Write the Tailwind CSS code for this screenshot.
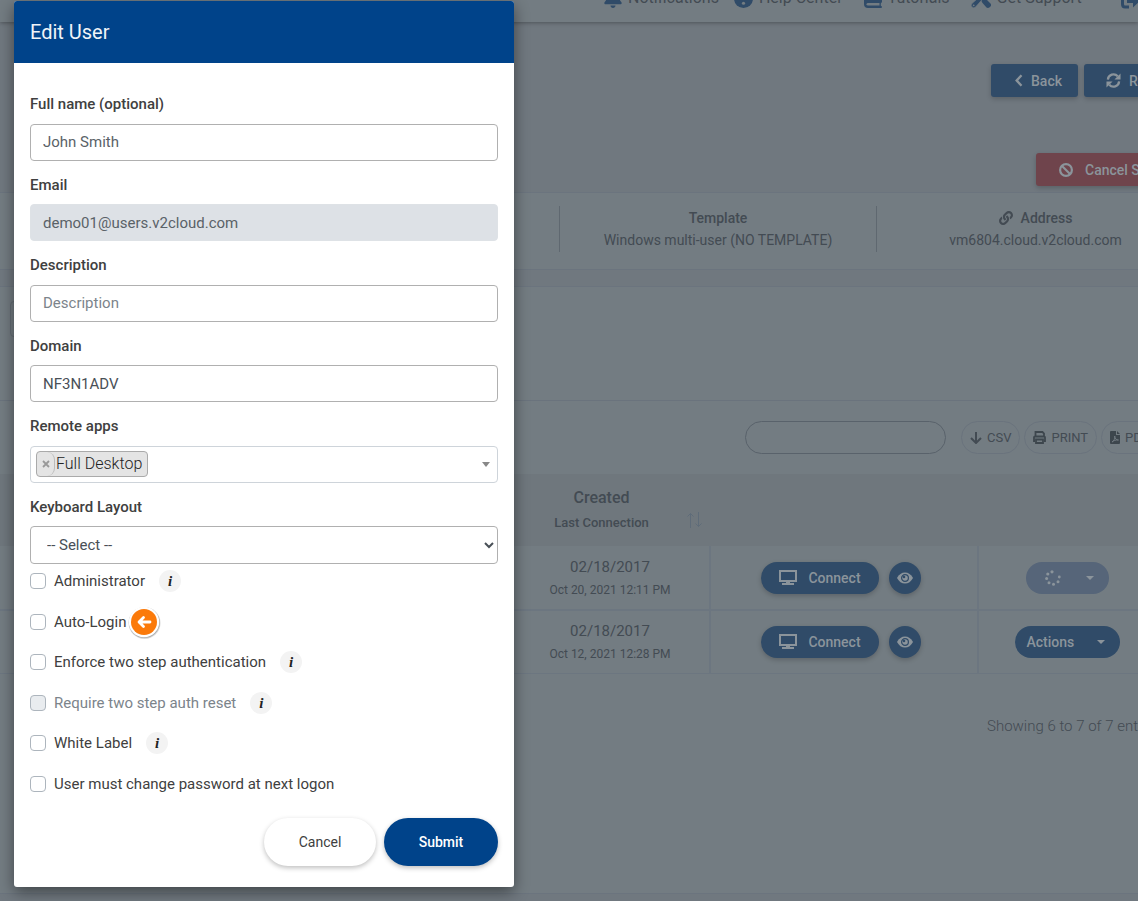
<!DOCTYPE html>
<html lang="en">
<head>
    <meta charset="UTF-8">
    <meta name="viewport" content="width=device-width, initial-scale=1.0">
    <title>Edit User</title>
    <script src="https://cdn.jsdelivr.net/npm/@tailwindcss/browser@4"></script>
</head>
<body class="bg-[#70787f] font-[Roboto,sans-serif] text-[15px] text-[#434b53] min-h-screen overflow-hidden">
    <!-- Page behind the dialog -->
    <div class="h-screen overflow-hidden">
        <!-- Top Navigation -->
        <nav class="relative bg-[#737c82] h-[22px] pl-[604px] pb-3 flex items-end gap-[15px] whitespace-nowrap text-base leading-6 shadow-[0_1px_4px_rgba(0,0,0,0.3)]">
            <a href="#" class="flex items-center gap-[6px]">
                <svg class="w-[18px] h-5 fill-[#304b68]" viewBox="0 0 448 512"><path d="M224 512c35 0 64-29 64-64H160c0 35 29 64 64 64zm215-150c-19-21-55-52-55-154 0-78-54-140-128-155V32a32 32 0 0 0-64 0v21C118 68 64 130 64 208c0 102-36 133-55 154-6 6-9 14-9 22 0 16 13 32 32 32h384c19 0 32-16 32-32 0-8-3-16-9-22z"/></svg>
                Notifications
            </a>
            <a href="#" class="flex items-center gap-[6px]">
                <svg class="w-[19px] h-[19px]" viewBox="0 0 20 20"><circle cx="10" cy="10" r="10" fill="#304b68"/><path d="M7 7.500c0-4 6-4 6-.5 0 2-3 2-3 4.500" fill="none" stroke="#737c82" stroke-width="2"/><circle cx="10" cy="15" r="1.700" fill="#737c82"/></svg>
                Help Center
            </a>
            <a href="#" class="flex items-center gap-[6px] ml-[6px]">
                <svg class="w-[18px] h-5" viewBox="0 0 18 20"><path d="M4 0h12.500Q18 0 18 1.500v12q0 1-1 1.500-.5 1.500 0 3 1 0 1 1t-1 1H4q-4 0-4-4V4Q0 0 4 0z" fill="#304b68"/><path d="M4 15h11.500v2.500H4q-1.500 0-1.500-1.200T4 15z" fill="#737c82"/></svg>
                Tutorials
            </a>
            <a href="#" class="flex items-center gap-[6px] ml-[6px]">
                <svg class="w-5 h-5" viewBox="0 0 20 20"><path d="M1 0l5 3v3l5 5c2-1 4 0 5 1l3.500 3.500q1.500 2-.5 3.500t-3.500.5L12 15.500c-1.500-1.500-2-3-1-4.500L5.500 7H3L0 2z" fill="#304b68"/><path d="M19.700 4.500A5.500 5.500 0 0 1 12.500 10L4.500 19Q2.500 20.500 1 19t0-3.500L9.500 8A5.500 5.500 0 0 1 15.500.3L13 3v3.500h3.500z" fill="#304b68" stroke="#737c82" stroke-width=".6"/><circle cx="2.700" cy="17.300" r=".9" fill="#737c82"/></svg>
                Get Support
            </a>
            <a href="#" aria-label="Log out" class="ml-6">
                <svg class="w-5 h-5" viewBox="0 0 20 20"><path d="M8 3H4Q1.500 3 1.500 6v8q0 3 2.500 3h4" fill="none" stroke="#304b68" stroke-width="3"/><path d="M6 7.500h6V3l8 7-8 7.500V13H6z" fill="#304b68"/></svg>
            </a>
        </nav>

        <!-- Page Actions -->
        <div class="flex gap-[6px] pl-[991px] mt-[42px] whitespace-nowrap text-sm font-medium text-[#8b949b]">
            <button class="shrink-0 flex items-center justify-center gap-2 w-[87px] h-[33px] pl-2 rounded-[3px] bg-[#304b68] shadow-[0_2px_5px_rgba(0,0,0,0.2)]">
                <svg class="w-2 h-[13px]" viewBox="0 0 8 13"><path d="M6.500 1.300L1.700 6.500l4.800 5.200" fill="none" stroke="currentColor" stroke-width="2.400"/></svg>
                Back
            </button>
            <button class="shrink-0 flex items-center gap-2 w-[110px] h-[33px] pl-[22px] rounded-[3px] bg-[#304b68] shadow-[0_2px_5px_rgba(0,0,0,0.2)]">
                <svg class="w-[15px] h-[15px]" viewBox="0 0 16 16"><path d="M2 7a6 6 0 0 1 10.500-3.500M14 9A6 6 0 0 1 3.500 12.500" fill="none" stroke="currentColor" stroke-width="2.400"/><path d="M15.500.5V7H9zM.5 15.500V9H7z" fill="currentColor"/></svg>
                Refresh
            </button>
        </div>
        <div class="flex pl-[1036px] mt-14 whitespace-nowrap text-sm font-medium text-[#8b949b]">
            <button class="shrink-0 flex items-center gap-3 w-[190px] h-[33px] pl-[23px] rounded-[3px] bg-[#6f444c] shadow-[0_2px_5px_rgba(0,0,0,0.2)]">
                <svg class="w-[14px] h-[14px]" viewBox="0 0 14 14" fill="none" stroke="currentColor" stroke-width="2.200"><circle cx="7" cy="7" r="5.900"/><path d="M3 3l8 8"/></svg>
                Cancel Subscription
            </button>
        </div>

        <!-- Server Info -->
        <div class="grid grid-cols-[560px_317px_317px] mt-[6px] pt-[13px] pb-[17px] bg-[#737c82] border-y border-[#6b747e] text-center text-sm leading-[22px]">
            <div class="border-r border-[#5f6870]"></div>
            <div class="border-r border-[#5f6870] py-px">
                <div class="font-medium">Template</div>
                <div>Windows multi-user (NO TEMPLATE)</div>
            </div>
            <div class="py-px">
                <div class="font-medium flex items-center justify-center gap-2">
                    <svg class="w-[14px] h-[14px]" viewBox="0 0 512 512" fill="currentColor"><path d="M326.600 185.400c59.700 59.800 58.900 155.700.4 214.600-.1.100-.3.300-.4.400l-67.200 67.200c-59.300 59.300-155.700 59.300-215 0-59.300-59.300-59.300-155.700 0-215l37.100-37.100c9.800-9.800 26.800-3.300 27.300 10.600.6 17.700 3.800 35.500 9.700 52.700 2 5.800.6 12.300-3.800 16.600l-13.100 13.100c-28 28-28.900 73.700-1.200 102 28 28.600 74.100 28.700 102.300.5l67.200-67.200c28.200-28.200 28.100-73.800 0-101.800-3.700-3.700-7.400-6.600-10.300-8.600a16 16 0 0 1-6.900-12.600c-.4-10.600 3.300-21.500 11.700-29.800l21.100-21.100c5.500-5.500 14.200-6.200 20.600-1.700a152.500 152.500 0 0 1 20.500 17.200zM467.500 44.400c-59.300-59.300-155.700-59.300-215 0l-67.200 67.200c-.1.100-.3.300-.4.400-58.600 58.900-59.400 154.800.4 214.600a152.500 152.500 0 0 0 20.500 17.200c6.400 4.500 15.100 3.800 20.600-1.700l21.100-21.100c8.400-8.400 12.100-19.200 11.700-29.800a16 16 0 0 0-6.900-12.600c-2.900-2-6.600-4.900-10.300-8.600-28.100-28.100-28.200-73.600 0-101.800l67.200-67.200c28.200-28.200 74.300-28.100 102.300.5 27.800 28.300 26.900 73.900-1.200 102l-13.100 13.100c-4.400 4.400-5.800 10.800-3.800 16.600 5.900 17.200 9 35 9.700 52.700.5 13.900 17.500 20.400 27.300 10.600l37.100-37.100c59.300-59.300 59.300-155.700 0-215z"/></svg>
                    Address
                </div>
                <div>vm6804.cloud.v2cloud.com</div>
            </div>
        </div>

        <!-- Users Panel -->
        <main class="mt-4 bg-[#737c82] border-y border-[#6b747e]">
            <div class="h-[114px] pt-[14px] pl-[10px] border-b border-[#6a737d]">
                <div class="w-40 h-9 rounded border border-[#646c74]"></div>
            </div>

            <div class="flex items-center gap-1 pl-[745px] py-5 whitespace-nowrap text-[13px]">
                <input type="search" aria-label="Search users" class="shrink-0 w-[201px] h-[33px] mr-[11px] px-3 rounded-full border border-[#59626b]">
                <button class="shrink-0 flex items-center gap-[5px] h-[33px] px-2 rounded-full border border-[#6a737d]">
                    <svg class="w-3 h-3" viewBox="0 0 12 12" fill="none" stroke="currentColor" stroke-width="2"><path d="M6 0v11M1 6l5 5 5-5"/></svg>
                    CSV
                </button>
                <button class="shrink-0 flex items-center gap-[5px] h-[33px] px-2 rounded-full border border-[#6a737d]">
                    <svg class="w-[13px] h-[13px]" viewBox="0 0 13 13"><path d="M2.500 5V1h7l1.500 1.500V5M2 10H1V6.500Q1 5.500 2 5.500h9q1 0 1 1V10h-1M3 8.500h7V12H3z" fill="none" stroke="#3d464d" stroke-width="1.800"/></svg>
                    PRINT
                </button>
                <button class="shrink-0 flex items-center gap-[5px] h-[33px] px-2 rounded-full border border-[#6a737d]">
                    <svg class="w-[10px] h-[13px]" viewBox="0 0 10 13"><path d="M1 0h5v4h4v8q0 1-1 1H1q-1 0-1-1V1q0-1 1-1zM7 0l3 3H7z" fill="#3d464d"/><path d="M2 11c2-1 3-3 2.700-6 .3 3 1.800 4 3.800 4-3-.3-5 .7-6.500 2z" fill="none" stroke="#737c82" stroke-width=".9"/></svg>
                    PDF
                </button>
            </div>

            <table class="w-[1157px] table-fixed text-center">
                <colgroup>
                    <col class="w-[493px]">
                    <col class="w-[217px]">
                    <col class="w-[268px]">
                    <col class="w-[179px]">
                </colgroup>
                <thead class="bg-[#6f777d]">
                    <tr class="h-[72px]">
                        <th></th>
                        <th class="relative font-medium">
                            <div class="text-base leading-[26px]">Created</div>
                            <div class="text-[13px] leading-6">Last Connection</div>
                            <svg class="absolute right-2 bottom-[18px] w-4 h-4" viewBox="0 0 16 16" fill="none" stroke="#5f6c79"><path d="M4.500 16V1.500M1.500 4.500l3-3 3 3M12.500 0v14.500M9.500 11.500l3 3 3-3"/></svg>
                        </th>
                        <th></th>
                        <th></th>
                    </tr>
                </thead>
                <tbody>
                    <tr class="h-16 border-b-2 border-[#6c7680]">
                        <td></td>
                        <td class="pl-[18px] border-r-2 border-[#6c7680]">
                            <div class="leading-6">02/18/2017</div>
                            <div class="text-xs leading-[22px]">Oct 20, 2021 12:11 PM</div>
                        </td>
                        <td class="border-r-2 border-[#6c7680]">
                            <div class="flex items-center justify-center gap-[10px] pr-[6px] font-medium text-[#8b949b]">
                                <button class="flex items-center justify-center gap-[11px] w-[118px] h-8 rounded-full bg-[#304b68] text-sm shadow-[0_2px_5px_rgba(0,0,0,0.2)]">
                                    <svg class="w-[18px] h-[15px]" viewBox="0 0 18 15"><path d="M1 1h16v10H1zM8 11v2h2v-2M3 14h12" fill="none" stroke="currentColor" stroke-width="2"/></svg>
                                    Connect
                                </button>
                                <button aria-label="View user" class="flex items-center justify-center w-8 h-8 rounded-full bg-[#304b68] shadow-[0_2px_5px_rgba(0,0,0,0.2)]">
                                    <svg class="w-4 h-3" viewBox="0 0 16 12"><path d="M0 6Q3 .5 8 .5T16 6q-3 5.500-8 5.500T0 6z" fill="currentColor"/><circle cx="8" cy="6" r="3.400" fill="none" stroke="#304b68" stroke-width="1.200"/><circle cx="7" cy="5" r="1.300" fill="#304b68"/></svg>
                                </button>
                            </div>
                        </td>
                        <td class="pr-[2px]">
                            <button aria-label="Loading actions" class="inline-flex items-center gap-[25px] w-[83px] h-8 pl-[19px] rounded-full bg-[#566579] align-middle text-[#8b949b]">
                                <svg class="w-4 h-4 shrink-0" viewBox="0 0 16 16" fill="currentColor"><circle cx="7" cy="1.800" r="1.600"/><circle cx="2.800" cy="4" r="1.600"/><circle cx="1.600" cy="8.500" r="1.500"/><circle cx="4" cy="12.800" r="1.500"/><circle cx="8.500" cy="14.300" r="1.500"/><circle cx="13" cy="11.800" r="1.500"/><circle cx="14.300" cy="7" r="1.400"/></svg>
                                <svg class="w-2 h-1 shrink-0" viewBox="0 0 8 4"><path d="M0 0h8L4 4z" fill="currentColor"/></svg>
                            </button>
                        </td>
                    </tr>
                    <tr class="h-[63px] border-b border-[#6c7680]">
                        <td></td>
                        <td class="pl-[18px] border-r-2 border-[#6c7680]">
                            <div class="leading-6">02/18/2017</div>
                            <div class="text-xs leading-[22px]">Oct 12, 2021 12:28 PM</div>
                        </td>
                        <td class="border-r-2 border-[#6c7680]">
                            <div class="flex items-center justify-center gap-[10px] pr-[6px] font-medium text-[#8b949b]">
                                <button class="flex items-center justify-center gap-[11px] w-[118px] h-8 rounded-full bg-[#304b68] text-sm shadow-[0_2px_5px_rgba(0,0,0,0.2)]">
                                    <svg class="w-[18px] h-[15px]" viewBox="0 0 18 15"><path d="M1 1h16v10H1zM8 11v2h2v-2M3 14h12" fill="none" stroke="currentColor" stroke-width="2"/></svg>
                                    Connect
                                </button>
                                <button aria-label="View user" class="flex items-center justify-center w-8 h-8 rounded-full bg-[#304b68] shadow-[0_2px_5px_rgba(0,0,0,0.2)]">
                                    <svg class="w-4 h-3" viewBox="0 0 16 12"><path d="M0 6Q3 .5 8 .5T16 6q-3 5.500-8 5.500T0 6z" fill="currentColor"/><circle cx="8" cy="6" r="3.400" fill="none" stroke="#304b68" stroke-width="1.200"/><circle cx="7" cy="5" r="1.300" fill="#304b68"/></svg>
                                </button>
                            </div>
                        </td>
                        <td class="pr-[2px]">
                            <button class="inline-flex items-center justify-between w-[105px] h-8 pl-3 pr-[15px] rounded-full bg-[#304b68] align-middle text-sm font-medium text-[#8b949b]">
                                Actions
                                <svg class="w-2 h-1" viewBox="0 0 8 4"><path d="M0 0h8L4 4z" fill="currentColor"/></svg>
                            </button>
                        </td>
                    </tr>
                </tbody>
            </table>

            <p class="pl-[987px] pt-10 pb-[155px] leading-6 font-light whitespace-nowrap">Showing 6 to 7 of 7 entries</p>
        </main>
    </div>

    <!-- Edit User Dialog -->
    <div role="dialog" aria-modal="true" aria-labelledby="dialog-title" class="absolute top-px left-[14px] w-[500px] bg-white rounded-[3px] text-[#404040] shadow-[0_5px_15px_rgba(0,0,0,0.45)]">
        <div class="bg-[#00438a] rounded-t-[3px] px-4 py-4">
            <h1 id="dialog-title" class="text-xl leading-[30px] text-[#f0f4f8]">Edit User</h1>
        </div>
        <form class="px-4 pt-[30px] pb-[21px] leading-normal">
            <label for="full-name" class="block mb-2 font-medium">Full name (optional)</label>
            <input id="full-name" type="text" value="John Smith" class="block w-full h-[37px] mb-[13px] px-3 rounded border border-[#b0b0b0] text-[#5a6268]">

            <label for="email" class="block mb-2 font-medium">Email</label>
            <input id="email" type="email" value="demo01@users.v2cloud.com" readonly class="block w-full h-[37px] mb-[13px] px-3 rounded border border-[#dee2e6] bg-[#dde1e6] text-[#5a6268]">

            <label for="description" class="block mb-2 font-medium">Description</label>
            <input id="description" type="text" placeholder="Description" class="block w-full h-[37px] mb-[13px] px-3 rounded border border-[#b0b0b0] text-[#495057] placeholder:text-[#7c848b]">

            <label for="domain" class="block mb-2 font-medium">Domain</label>
            <input id="domain" type="text" value="NF3N1ADV" class="block w-full h-[37px] mb-[13px] px-3 rounded border border-[#b0b0b0] text-[#495057]">

            <div id="apps-label" class="mb-2 font-medium">Remote apps</div>
            <div role="group" aria-labelledby="apps-label" class="flex items-center justify-between h-[37px] mb-[13px] pl-[5px] pr-[7px] rounded border border-[#ced4da]">
                <span class="flex h-[26px] pr-[5px] rounded border border-[#aaa] bg-[#e4e4e4] text-base leading-6 font-light text-[#222]">
                    <button type="button" aria-label="Remove Full Desktop" class="flex items-center justify-center w-[18px] mr-px rounded-r-lg border-r border-[#bbb] text-[#999]">
                        <svg class="w-2 h-2" viewBox="0 0 8 8"><path d="M1 1l6 6M7 1L1 7" stroke="currentColor" stroke-width="1.800"/></svg>
                    </button>
                    Full Desktop
                </span>
                <svg class="w-2 h-[5px]" viewBox="0 0 8 5"><path d="M0 0h8L4 5z" fill="#888"/></svg>
            </div>

            <label for="keyboard" class="block mb-2 font-medium">Keyboard Layout</label>
            <select id="keyboard" class="block w-full h-[38px] mb-[6px] px-3 rounded border border-[#b0b0b0] bg-white text-[#495057]">
                <option>-- Select --</option>
            </select>

            <div class="flex items-center mb-[18px]">
                <input id="administrator" type="checkbox" class="appearance-none w-4 h-4 mr-2 rounded border border-[#adb5bd] bg-white">
                <label for="administrator">Administrator</label>
                <button type="button" aria-label="About administrator" class="w-[22px] h-[22px] ml-[14px] rounded-full bg-[#f3f3f3] font-['Liberation_Serif',serif] font-bold italic leading-[22px] text-[#222]">i</button>
            </div>
            <div class="flex items-center mb-[18px]">
                <input id="auto-login" type="checkbox" class="appearance-none w-4 h-4 mr-2 rounded border border-[#adb5bd] bg-white">
                <label for="auto-login">Auto-Login</label>
                <svg class="w-9 h-9 -my-2" viewBox="0 0 36 36">
                    <circle cx="18.500" cy="19" r="16" fill="#000" opacity=".15"/>
                    <circle cx="18.300" cy="18.600" r="15.500" fill="#000" opacity=".2"/>
                    <circle cx="18" cy="18" r="15.200" fill="#fff"/>
                    <circle cx="18" cy="18" r="13" fill="#fb7a0a"/>
                    <path d="M24 18H13.500M17.500 13.500L13 18l4.500 4.500" fill="none" stroke="#fff" stroke-width="2.800" stroke-linecap="round" stroke-linejoin="round"/>
                </svg>
            </div>
            <div class="flex items-center mb-[18px]">
                <input id="two-step" type="checkbox" class="appearance-none w-4 h-4 mr-2 rounded border border-[#adb5bd] bg-white">
                <label for="two-step">Enforce two step authentication</label>
                <button type="button" aria-label="About two step authentication" class="w-[22px] h-[22px] ml-[14px] rounded-full bg-[#f3f3f3] font-['Liberation_Serif',serif] font-bold italic leading-[22px] text-[#222]">i</button>
            </div>
            <div class="flex items-center mb-[18px]">
                <input id="auth-reset" type="checkbox" disabled class="appearance-none w-4 h-4 mr-2 rounded border border-[#adb5bd] bg-[#e9ecef]">
                <label for="auth-reset" class="text-[#7c848b]">Require two step auth reset</label>
                <button type="button" aria-label="About auth reset" class="w-[22px] h-[22px] ml-[14px] rounded-full bg-[#f3f3f3] font-['Liberation_Serif',serif] font-bold italic leading-[22px] text-[#222]">i</button>
            </div>
            <div class="flex items-center mb-[18px]">
                <input id="white-label" type="checkbox" class="appearance-none w-4 h-4 mr-2 rounded border border-[#adb5bd] bg-white">
                <label for="white-label">White Label</label>
                <button type="button" aria-label="About white label" class="w-[22px] h-[22px] ml-[14px] rounded-full bg-[#f3f3f3] font-['Liberation_Serif',serif] font-bold italic leading-[22px] text-[#222]">i</button>
            </div>
            <div class="flex items-center">
                <input id="change-password" type="checkbox" class="appearance-none w-4 h-4 mr-2 rounded border border-[#adb5bd] bg-white">
                <label for="change-password">User must change password at next logon</label>
            </div>

            <div class="flex justify-end gap-2 mt-[23px] text-sm">
                <button type="button" class="w-28 h-12 rounded-full bg-white shadow-[0_2px_5px_rgba(0,0,0,0.25)]">Cancel</button>
                <button type="submit" class="w-[114px] h-12 rounded-full bg-[#00438a] font-medium text-white shadow-[0_2px_5px_rgba(0,0,0,0.25)]">Submit</button>
            </div>
        </form>
    </div>
</body>
</html>
